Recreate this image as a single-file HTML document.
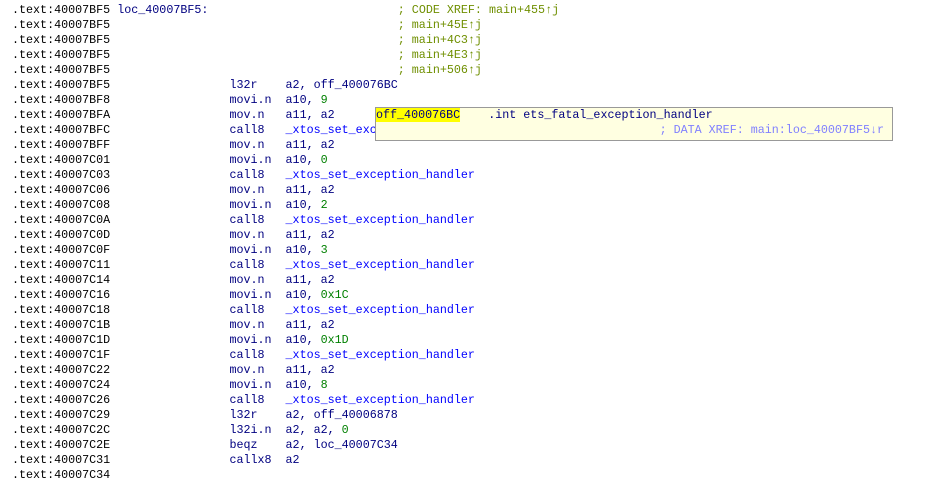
<!DOCTYPE html>
<html><head><meta charset="utf-8"><style>
html,body{margin:0;padding:0;background:#fff;width:940px;height:487px;overflow:hidden}
pre{margin:0;position:absolute;left:12px;top:3px;font-family:"Liberation Mono",monospace;font-size:11.7px;line-height:15px;color:#000}
.l{color:#000080}.m{color:#000080}.o{color:#000080}.n{color:#008000}.c{color:#6f8f00}.f{color:#0000ff}
#tip{position:absolute;left:375px;top:107px;width:516px;height:32px;background:#ffffe1;border:1px solid #999;font-family:"Liberation Mono",monospace;font-size:11.7px;line-height:15px}
#tip .h{background:#ffff00;color:#000080}
</style></head><body>
<pre>.text:40007BF5 <span class="l">loc_40007BF5:</span>                           <span class="c">; CODE XREF: main+455↑j</span>
.text:40007BF5                                         <span class="c">; main+45E↑j</span>
.text:40007BF5                                         <span class="c">; main+4C3↑j</span>
.text:40007BF5                                         <span class="c">; main+4E3↑j</span>
.text:40007BF5                                         <span class="c">; main+506↑j</span>
.text:40007BF5                 <span class="m">l32r    a2, off_400076BC</span>
.text:40007BF8                 <span class="m">movi.n  a10, <span class="n">9</span></span>
.text:40007BFA                 <span class="m">mov.n   a11, a2</span>
.text:40007BFC                 <span class="m">call8   </span><span class="f">_xtos_set_exc</span>
.text:40007BFF                 <span class="m">mov.n   a11, a2</span>
.text:40007C01                 <span class="m">movi.n  a10, <span class="n">0</span></span>
.text:40007C03                 <span class="m">call8   </span><span class="f">_xtos_set_exception_handler</span>
.text:40007C06                 <span class="m">mov.n   a11, a2</span>
.text:40007C08                 <span class="m">movi.n  a10, <span class="n">2</span></span>
.text:40007C0A                 <span class="m">call8   </span><span class="f">_xtos_set_exception_handler</span>
.text:40007C0D                 <span class="m">mov.n   a11, a2</span>
.text:40007C0F                 <span class="m">movi.n  a10, <span class="n">3</span></span>
.text:40007C11                 <span class="m">call8   </span><span class="f">_xtos_set_exception_handler</span>
.text:40007C14                 <span class="m">mov.n   a11, a2</span>
.text:40007C16                 <span class="m">movi.n  a10, <span class="n">0x1C</span></span>
.text:40007C18                 <span class="m">call8   </span><span class="f">_xtos_set_exception_handler</span>
.text:40007C1B                 <span class="m">mov.n   a11, a2</span>
.text:40007C1D                 <span class="m">movi.n  a10, <span class="n">0x1D</span></span>
.text:40007C1F                 <span class="m">call8   </span><span class="f">_xtos_set_exception_handler</span>
.text:40007C22                 <span class="m">mov.n   a11, a2</span>
.text:40007C24                 <span class="m">movi.n  a10, <span class="n">8</span></span>
.text:40007C26                 <span class="m">call8   </span><span class="f">_xtos_set_exception_handler</span>
.text:40007C29                 <span class="m">l32r    a2, off_40006878</span>
.text:40007C2C                 <span class="m">l32i.n  a2, a2, <span class="n">0</span></span>
.text:40007C2E                 <span class="m">beqz    a2, loc_40007C34</span>
.text:40007C31                 <span class="m">callx8  a2</span>
.text:40007C34
</pre>
<div id="tip"><div style="position:absolute;left:0;top:0;white-space:pre"><span class="h">off_400076BC</span><span style="color:#000080">    .int ets_fatal_exception_handler</span></div>
<div style="position:absolute;right:8px;top:15px;white-space:pre;color:#8080ff">; DATA XREF: main:loc_40007BF5↓r</div></div>
</body></html>
